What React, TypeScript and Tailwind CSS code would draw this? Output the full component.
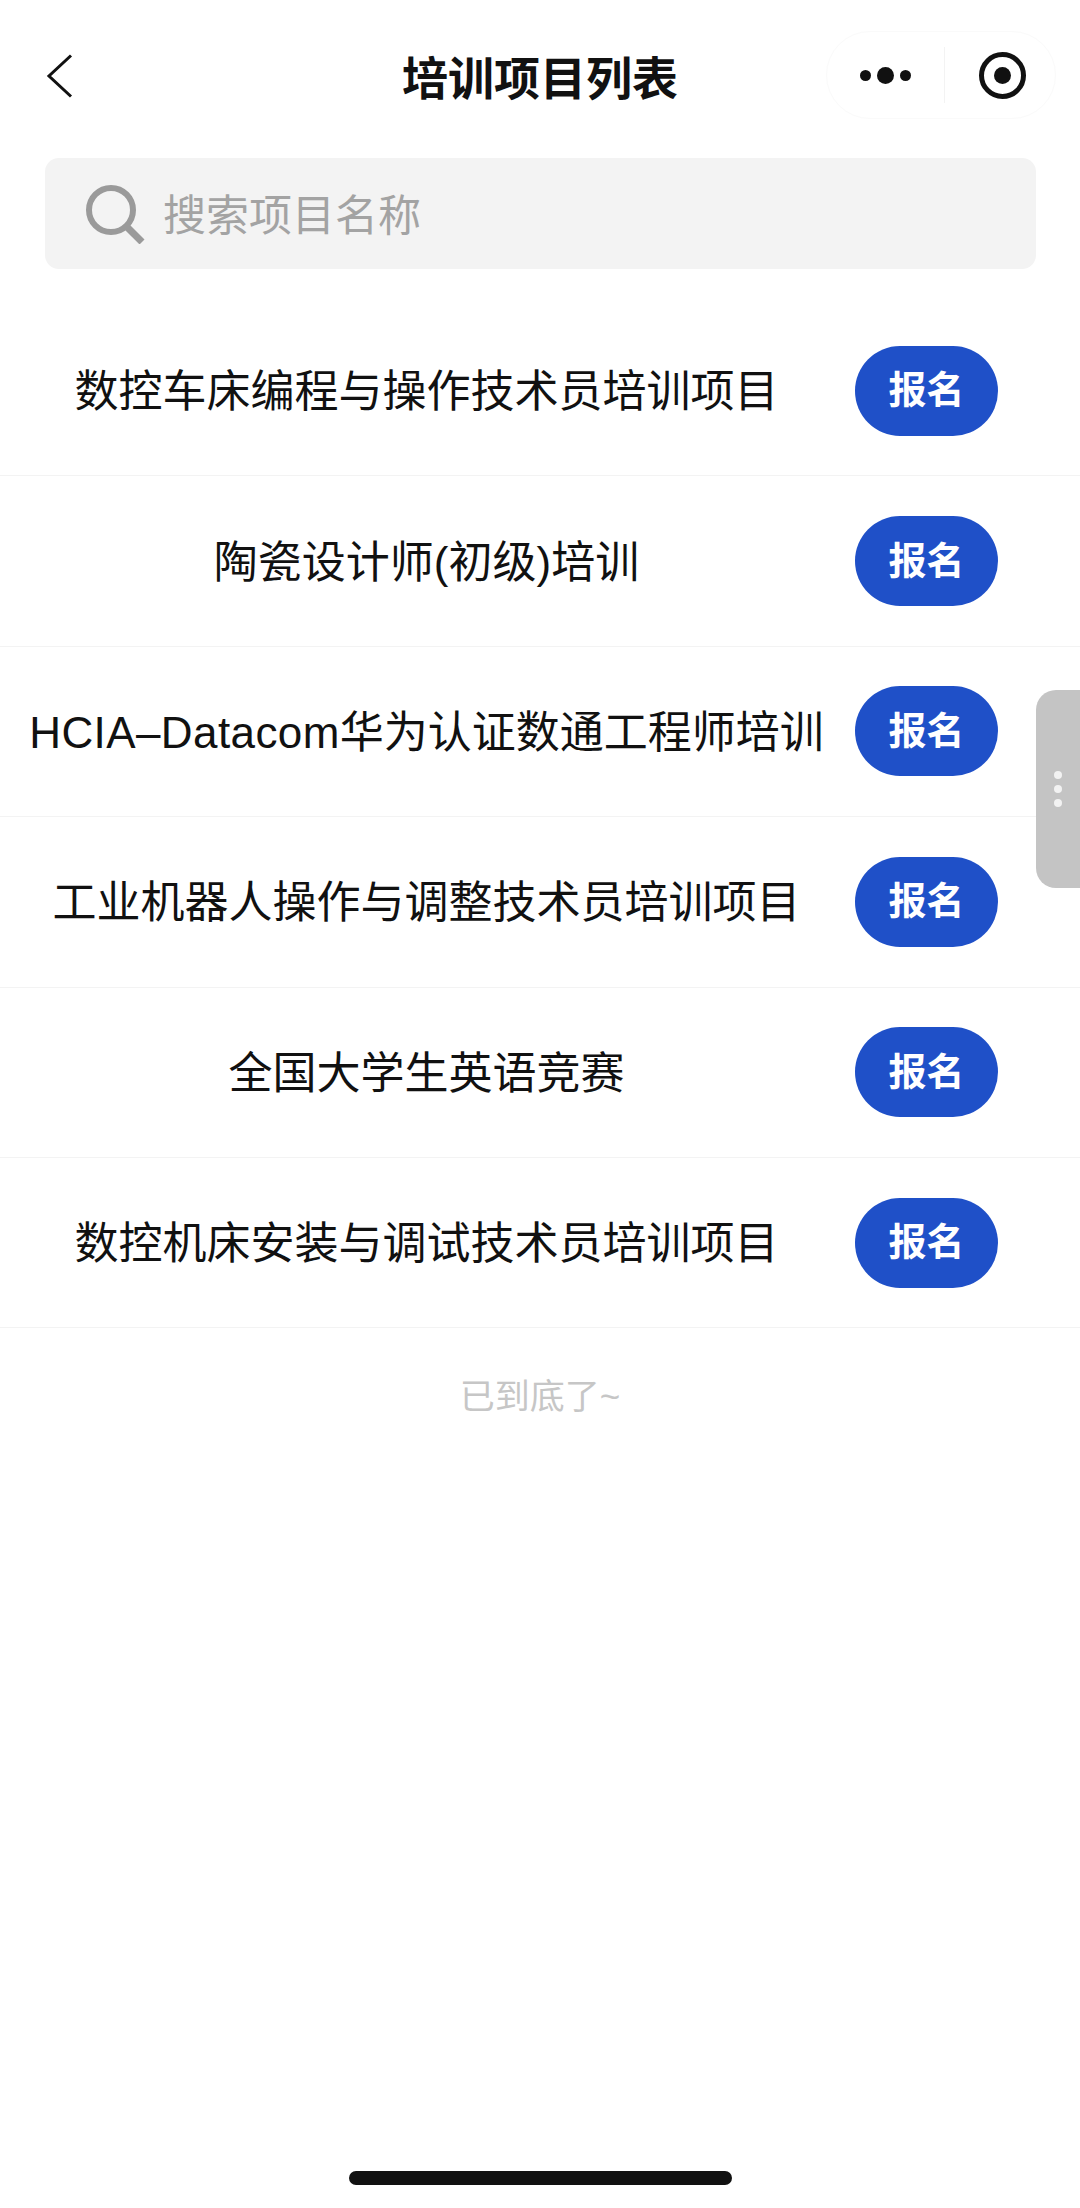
const projects = [
  "数控车床编程与操作技术员培训项目",
  "陶瓷设计师(初级)培训",
  <>
    <span className="tracking-[0.4px]">HCIA–Datacom</span>华为认证数通工程师培训
  </>,
  "工业机器人操作与调整技术员培训项目",
  "全国大学生英语竞赛",
  "数控机床安装与调试技术员培训项目",
];

const App = () => {
  return (
    <div className="relative min-h-[2208px] w-[1080px] overflow-hidden bg-white font-['Liberation_Sans','Noto_Sans_CJK_SC',sans-serif] text-[#111]">
      {/* nav bar */}
      <div className="relative flex h-[158px] items-start pl-[46px] pt-[54px]">
        <svg width="27" height="44" viewBox="0 0 27 44" fill="none" stroke="#111" strokeWidth="3">
          <path d="M25 1.5 L3 22 L25 42.5" />
        </svg>
        <h1 className="absolute left-0 top-[48px] w-full text-center text-[46px] leading-[62px] font-bold">
          培训项目列表
        </h1>
        {/* wechat capsule */}
        <div className="absolute left-[826px] top-[31px] flex h-[88px] w-[230px] items-center rounded-full border border-[#fafafa]">
          <div className="flex w-[117px] items-center justify-end gap-[6px] pr-[33px]">
            <span className="h-[11px] w-[11px] rounded-full bg-[#111]" />
            <span className="h-[17px] w-[17px] rounded-full bg-[#111]" />
            <span className="h-[11px] w-[11px] rounded-full bg-[#111]" />
          </div>
          <div className="h-[56px] w-px bg-[#f3f3f3]" />
          <div className="ml-[34px] flex h-[47px] w-[47px] items-center justify-center rounded-full border-[5px] border-[#111]">
            <span className="h-[17px] w-[17px] rounded-full bg-[#111]" />
          </div>
        </div>
      </div>

      {/* search */}
      <div className="ml-[45px] flex h-[111px] w-[991px] items-center gap-[18px] rounded-[14px] bg-[#f3f3f3] pl-[40px]">
        <svg width="60" height="60" viewBox="0 0 60 60" fill="none" stroke="#9a9a9a" strokeWidth="6">
          <circle cx="26" cy="26" r="22" />
          <path d="M41 42 L57 58" strokeWidth="7" />
        </svg>
        <span className="pt-[6px] text-[43px] leading-none text-[#a3a3a3]">搜索项目名称</span>
      </div>

      {/* list */}
      <div className="mt-[37px]">
        {projects.map((name, i) => (
          <div key={i} className="flex h-[170.4px] items-center border-b border-[#f3f3f3]">
            <div className="w-[853px] pt-[3px] text-center text-[44px] leading-none whitespace-nowrap">{name}</div>
            <button className="ml-[2px] flex h-[90px] w-[143px] items-center justify-center rounded-full bg-[#1f50c8] text-[38px] font-semibold text-white">
              报名
            </button>
          </div>
        ))}
      </div>

      <div className="mt-[47px] text-center text-[35px] leading-[44px] text-[#c6c6c6]">已到底了~</div>

      {/* side handle */}
      <div className="absolute left-[1036px] top-[690px] flex h-[198px] w-[44px] flex-col items-center justify-center gap-[6px] rounded-l-[20px] bg-[#c4c4c4]">
        <span className="h-[8px] w-[8px] rounded-full bg-[#f2f2f2]" />
        <span className="h-[8px] w-[8px] rounded-full bg-[#f2f2f2]" />
        <span className="h-[8px] w-[8px] rounded-full bg-[#f2f2f2]" />
      </div>

      {/* home indicator */}
      <div className="absolute bottom-[23px] left-[349px] h-[14px] w-[383px] rounded-full bg-[#111]" />
    </div>
  );
};

export default App;
